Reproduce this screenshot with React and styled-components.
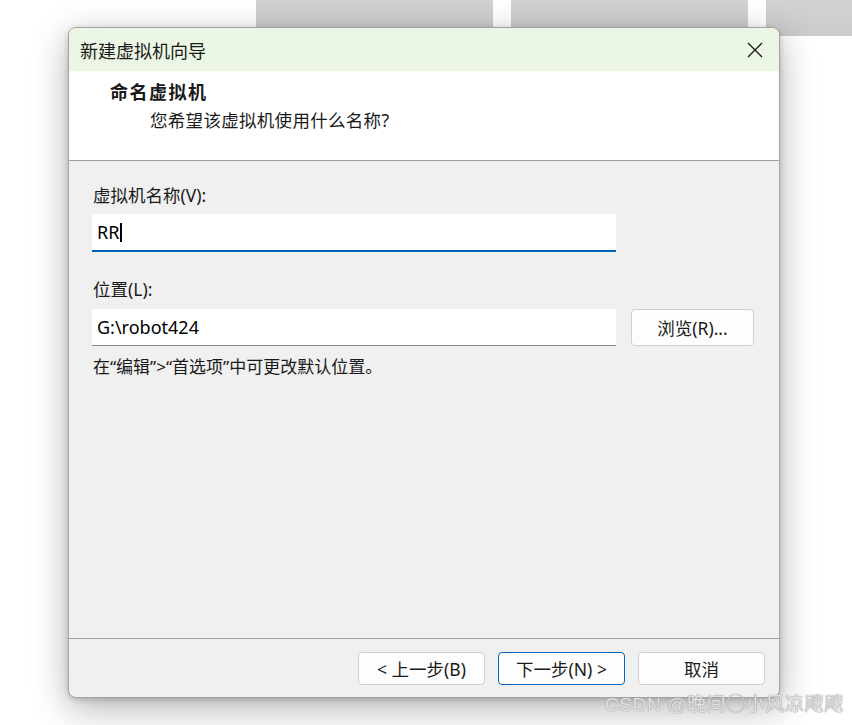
import React from "react";
import styled, { createGlobalStyle } from "styled-components";

const Global = createGlobalStyle`
  html, body { margin: 0; padding: 0; background: #ffffff; }
  body { width: 852px; height: 725px; overflow: hidden; }
  * { box-sizing: border-box; }
`;

const FONT = `"Noto Sans", "Noto Sans CJK SC", sans-serif`;

const Desktop = styled.div`
  position: relative;
  width: 852px;
  height: 725px;
  background: #ffffff;
  font-family: ${FONT};
  color: #1a1a1a;
`;

const TileRow = styled.div`
  display: flex;
  gap: 18px;
  padding-left: 256px;
  height: 36px;
`;

const Tile = styled.div`
  width: ${(p) => p.$w}px;
  flex: none;
  height: 100%;
  background: linear-gradient(#d2d2d2, #cbcbcb);
`;

const Window = styled.div`
  position: absolute;
  left: 68px;
  top: 27px;
  width: 712px;
  height: 671px;
  border: 1px solid #a3a3a3;
  border-radius: 8px;
  overflow: hidden;
  background: #f0f0f0;
  display: flex;
  flex-direction: column;
  box-shadow: 0 10px 36px rgba(0, 0, 0, 0.3), 0 2px 6px rgba(0, 0, 0, 0.18);
`;

const TitleBar = styled.div`
  height: 43px;
  flex: none;
  background: #ecf6e5;
  display: flex;
  align-items: center;
  justify-content: space-between;
  padding: 0 16px 0 11px;
  font-size: 18px;
`;

const CloseBtn = styled.div`
  width: 16px;
  height: 16px;
  display: flex;
  align-items: center;
  justify-content: center;
`;

const Header = styled.div`
  height: 90px;
  flex: none;
  background: #ffffff;
  border-bottom: 1px solid #a0a0a0;
  padding: 10px 0 0 41px;
  display: flex;
  flex-direction: column;
`;

const HeaderTitle = styled.div`
  font-size: 18px;
  font-weight: 700;
  letter-spacing: 1.5px;
  line-height: 22px;
`;

const HeaderSub = styled.div`
  font-size: 17.5px;
  line-height: 22px;
  margin-top: 6px;
  padding-left: 40px;
  letter-spacing: 0.3px;
`;

const Body = styled.div`
  flex: 1;
  padding: 22px 0 0 23px;
  display: flex;
  flex-direction: column;
`;

const Label = styled.div`
  font-size: 17.5px;
  line-height: 24px;
  padding-left: 1px;
  margin-top: ${(p) => p.$mt || 0}px;
`;

const Row = styled.div`
  display: flex;
  align-items: center;
  gap: 15px;
  margin-top: ${(p) => p.$mt || 0}px;
`;

const Field = styled.div`
  width: 524px;
  height: ${(p) => p.$h}px;
  background: #ffffff;
  border-bottom: ${(p) => (p.$focus ? "2px solid #0062b8" : "1px solid #8a8a8a")};
  display: flex;
  align-items: center;
  padding-left: 5px;
  font-size: 18px;
  color: #000;
`;

const Caret = styled.span`
  display: inline-block;
  width: 2px;
  height: 19px;
  background: #000;
  margin-left: 1px;
`;

const Button = styled.div`
  width: ${(p) => p.$w || 127}px;
  height: ${(p) => p.$h || 33}px;
  border: 1px solid ${(p) => (p.$primary ? "#0067c0" : "#d0d0d0")};
  border-radius: 4px;
  background: #fdfdfd;
  display: flex;
  align-items: center;
  justify-content: center;
  font-size: 17.5px;
  color: #1a1a1a;
`;

const Hint = styled.div`
  font-size: 17px;
  line-height: 24px;
  margin-top: 9px;
  padding-left: 1px;
`;

const Footer = styled.div`
  height: 59px;
  flex: none;
  border-top: 1px solid #a0a0a0;
  display: flex;
  justify-content: flex-end;
  align-items: flex-start;
  gap: 13px;
  padding: 13px 14px 0 0;
`;

const Watermark = styled.div`
  position: absolute;
  left: 605px;
  top: 693px;
  font-size: 19px;
  letter-spacing: 0.6px;
  line-height: 24px;
  color: #e2e2e2;
  font-family: "Liberation Sans", "Noto Sans CJK SC", sans-serif;
  text-shadow: 0 0 1px #9a9a9a, 0 0 1px #9a9a9a;
  white-space: nowrap;
`;

export default function App() {
  return (
    <Desktop>
      <Global />
      <TileRow>
        <Tile $w={237} />
        <Tile $w={237} />
        <Tile $w={90} />
      </TileRow>
      <Window>
        <TitleBar>
          <span>新建虚拟机向导</span>
          <CloseBtn>
            <svg width="16" height="16" viewBox="0 0 16 16">
              <path d="M1 1 L15 15 M15 1 L1 15" stroke="#1a1a1a" strokeWidth="1.4" fill="none" />
            </svg>
          </CloseBtn>
        </TitleBar>
        <Header>
          <HeaderTitle>命名虚拟机</HeaderTitle>
          <HeaderSub>您希望该虚拟机使用什么名称?</HeaderSub>
        </Header>
        <Body>
          <Label>虚拟机名称(V):</Label>
          <Row $mt={7}>
            <Field $h={38} $focus>
              RR<Caret />
            </Field>
          </Row>
          <Label $mt={25}>位置(L):</Label>
          <Row $mt={8}>
            <Field $h={37}>G:\robot424</Field>
            <Button $w={123} $h={37}>浏览(R)...</Button>
          </Row>
          <Hint>在“编辑”&gt;“首选项”中可更改默认位置。</Hint>
        </Body>
        <Footer>
          <Button>&lt; 上一步(B)</Button>
          <Button $primary>下一步(N) &gt;</Button>
          <Button>取消</Button>
        </Footer>
      </Window>
      <Watermark>CSDN @晚间◯小风凉飕飕</Watermark>
    </Desktop>
  );
}
